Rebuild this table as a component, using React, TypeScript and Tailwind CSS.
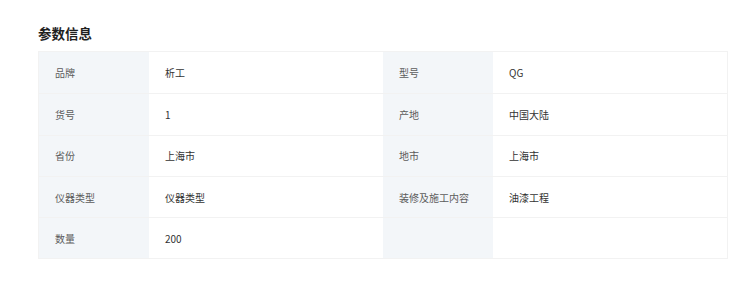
const rows: [string, string, string, string][] = [
  ["品牌", "析工", "型号", "QG"],
  ["货号", "1", "产地", "中国大陆"],
  ["省份", "上海市", "地市", "上海市"],
  ["仪器类型", "仪器类型", "装修及施工内容", "油漆工程"],
  ["数量", "200", "", ""],
];

export default function App() {
  return (
    <div
      className="w-[750px] h-[285px] bg-white pt-[25px] pl-[38px]"
      style={{ fontFamily: '"Noto Sans CJK SC", "Noto Sans", sans-serif' }}
    >
      <h2 className="text-[13.5px] leading-[16px] font-bold text-[#1f1f1f] mb-[10px]">参数信息</h2>
      <div className="w-[690px] border border-[#f2f2f2] grid grid-cols-[110px_234px_110px_1fr] text-[10px]">
        {rows.map((r, i) => (
          <div key={i} className="contents">
            <div className={`bg-[#f3f6f9] h-[41.3px] flex items-center pl-[16px] text-[#5c5c5c] ${i > 0 ? "border-t border-[#f2f2f2]" : ""}`}>{r[0]}</div>
            <div className={`h-[41.3px] flex items-center pl-[16px] text-[#333] ${i > 0 ? "border-t border-[#f2f2f2]" : ""}`}>{r[1]}</div>
            <div className={`bg-[#f3f6f9] h-[41.3px] flex items-center pl-[16px] text-[#5c5c5c] ${i > 0 ? "border-t border-[#f2f2f2]" : ""}`}>{r[2]}</div>
            <div className={`h-[41.3px] flex items-center pl-[16px] text-[#333] ${i > 0 ? "border-t border-[#f2f2f2]" : ""}`}>{r[3]}</div>
          </div>
        ))}
      </div>
    </div>
  );
}
